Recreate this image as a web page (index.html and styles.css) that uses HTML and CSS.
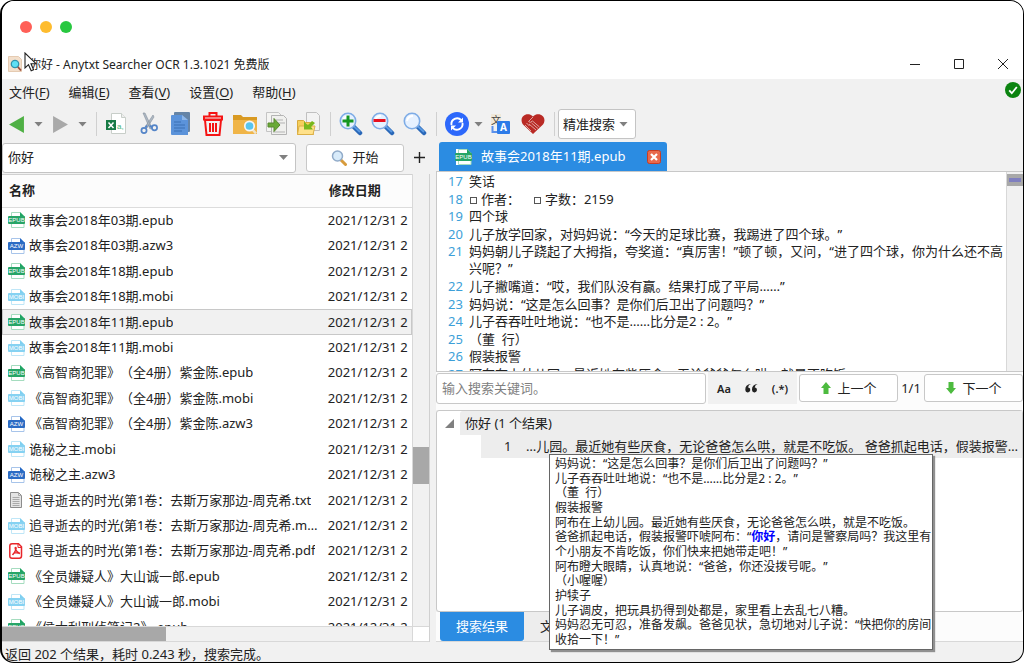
FILE: index.html
```html
<!DOCTYPE html>
<html lang="zh-CN">
<head>
<meta charset="utf-8">
<title>你好 - Anytxt Searcher OCR 1.3.1021 免费版</title>
<link rel="stylesheet" href="styles.css">
</head>
<body>
<svg class="sprite" aria-hidden="true">
  <symbol id="epub" viewBox="0 0 17 16"><path d="M3.500 5V.5h8.500l4 4V5M3.500 10v5.500H16V10" fill="#fff" stroke="#a5dcbf"/><path d="M12 0l4.500 4.500H12z" fill="#1fa463"/><rect y="4" width="17" height="8" rx="1" fill="#27a567"/><text x="8.500" y="10.400" text-anchor="middle" class="badge">EPUB</text></symbol>
  <symbol id="azw" viewBox="0 0 17 16"><path d="M3.500 5V.5h8.500l4 4V5M3.500 10v5.500H16V10" fill="#fff" stroke="#a7c4ea"/><path d="M12 0l4.500 4.500H12z" fill="#2468c4"/><rect y="4" width="17" height="8" rx="1" fill="#2c6cc4"/><text x="8.500" y="10.400" text-anchor="middle" class="badge">AZW</text></symbol>
  <symbol id="mobi" viewBox="0 0 17 16"><path d="M3.500 5V.5h8.500l4 4V5M3.500 10v5.500H16V10" fill="#fff" stroke="#bfe6f7"/><path d="M12 0l4.500 4.500H12z" fill="#7fcff0"/><rect y="4" width="17" height="8" rx="1" fill="#86d2f2"/><text x="8.500" y="10.400" text-anchor="middle" class="badge">MOBI</text></symbol>
  <symbol id="txt" viewBox="0 0 17 16"><path d="M2.500.5h8l3 3v12h-11z" fill="#e4e4e4" stroke="#8c8c8c"/><path d="M10.500.5v3h3M4.500 5.500h7M4.500 7.500h7M4.500 9.500h7M4.500 11.500h7M4.500 13.500h7" fill="none" stroke="#aaa"/></symbol>
  <symbol id="pdf" viewBox="0 0 17 16"><path d="M4 .8h6.500l3 3V13q0 2.200-2.200 2.200H4Q1.800 15.200 1.800 13V3Q1.800.8 4 .8z" fill="#fff" stroke="#e8262b" stroke-width="1.500"/><path d="M10 1v3.500h3.500" fill="none" stroke="#e8262b"/><path d="M7.500 4.500c1.400 0 .5 3.500-3 7.500M7.500 4.500C6.500 5 8 9 12 10.500M4.500 12c.5-2 4-3 7.500-1.500" fill="none" stroke="#e8262b" stroke-width="1.400"/></symbol>
  <symbol id="lens" viewBox="0 0 24 24"><path d="M14.500 14.500l6.500 6.500" stroke="#2a68b8" stroke-width="4.500" stroke-linecap="round"/><path d="M15 14.500l5.500 5" stroke="#5b9ae2" stroke-width="1.800" stroke-linecap="round"/><circle cx="9" cy="9" r="7.700" fill="#e6f1ff" stroke="#7eacE6" stroke-width="1.600"/><path d="M4 9q1-5 6-5" fill="none" stroke="#fff" stroke-width="2"/></symbol>
</svg>
<div class="window">
  <header class="titlebar">
    <div class="lights"><i class="red"></i><i class="amber"></i><i class="green"></i></div>
    <div class="caption">
      <svg class="appicon" viewBox="0 0 14 16"><path d="M.5.500h10l3 3v12H.5z" fill="#f3dfcb" stroke="#e5cbb2"/><path d="M9.500 10.500l3.500 4" stroke="#9a4a3a" stroke-width="1.800"/><circle cx="7" cy="8" r="3.700" fill="#5fe0f4" stroke="#3293ad" stroke-width="1.300"/></svg>
      <h1>你好 - Anytxt Searcher OCR 1.3.1021 免费版</h1>
      <svg class="cursor" viewBox="0 0 14 20"><path d="M1 1v15l3.500-3.300 2.700 6 2.400-1-2.600-6H12z" fill="#fff" stroke="#222" stroke-width="1.100"/></svg>
      <div class="winbtns">
        <button aria-label="最小化"><svg viewBox="0 0 12 12"><path d="M1 6.500h10" stroke="#222"/></svg></button>
        <button aria-label="最大化"><svg viewBox="0 0 12 12"><path d="M1.500 1.500h9v9h-9z" fill="none" stroke="#222"/></svg></button>
        <button aria-label="关闭"><svg viewBox="0 0 12 12"><path d="M1 1l10 10M11 1L1 11" stroke="#222"/></svg></button>
      </div>
    </div>
  </header>
  <nav class="menu">
    <button>文件(<u>F</u>)</button><button>编辑(<u>E</u>)</button><button>查看(<u>V</u>)</button><button>设置(<u>O</u>)</button><button>帮助(<u>H</u>)</button>
    <svg class="ok" viewBox="0 0 16 16"><circle cx="8" cy="8" r="8" fill="#0b8410"/><path d="M4.200 8.300l2.600 2.900 5-6.200" fill="none" stroke="#fff" stroke-width="1.800"/></svg>
  </nav>
  <div class="toolbar">
    <div class="group nav">
      <button aria-label="后退"><svg class="arrow" viewBox="0 0 14 16"><path d="M14 0v16L0 8z" fill="#4fb045"/></svg></button>
      <i class="caret"></i>
      <button aria-label="前进"><svg class="arrow" viewBox="0 0 14 16"><path d="M0 0v16l14-8z" fill="#a9a9a9"/></svg></button>
      <i class="caret"></i>
    </div>
    <div class="group">
      <button aria-label="导出 CSV"><svg viewBox="0 0 24 24"><path d="M6.500 1.500h10l4 4v16h-14z" fill="#fff" stroke="#c8cec9"/><path d="M16.500 1.500v4h4" fill="#eee" stroke="#c8cec9"/><rect x="1" y="8" width="10" height="10" fill="#187b45"/><path d="M3.500 10.500l5 5.500M8.500 10.500l-5 5.500" stroke="#fff" stroke-width="1.500"/><text x="12" y="17" class="csv">a,</text></svg></button>
      <button aria-label="剪切"><svg viewBox="0 0 24 24"><path d="M6 1l2 0 7 15-2 1zM16 3l1 2-7 11-2-1z" fill="#aeb8c3" stroke="#84909d" stroke-width=".6"/><path d="M10 13.500l-1.500 2M12.500 14l3 1" stroke="#5585c8" stroke-width="2"/><circle cx="7" cy="18.500" r="2.600" fill="none" stroke="#5585c8" stroke-width="1.700"/><circle cx="17.500" cy="15.800" r="2.600" fill="none" stroke="#5585c8" stroke-width="1.700"/></svg></button>
      <button aria-label="复制"><svg viewBox="0 0 24 24"><rect x="5" y="0" width="16" height="20" rx="1" fill="#6584a6"/><path d="M3 3h10l6 5v15H3q-1 0-1-1V4q0-1 1-1z" fill="#5b93da"/><path d="M5 10h7M5 13h11M5 16h11M5 19h8" stroke="#3a70b4" stroke-width="1.200"/><path d="M13 3v5h6" fill="#8db6e8"/></svg></button>
      <button aria-label="删除"><svg viewBox="0 0 24 24"><g fill="none" stroke="#f51414" stroke-width="2"><path d="M4 8h16l-1.500 15h-13zM3 7.500V4.500h18v3zM8.500 4.500V1h7v3.500M9 11v9M12 11v9M15 11v9"/></g></svg></button>
      <button aria-label="打开文件夹"><svg viewBox="0 0 24 24"><path d="M0 3h8l2 2h14v17H0z" fill="#d99a22"/><path d="M0 8h24v14H0z" fill="#f0b548"/><path d="M19 17l4 4.500" stroke="#efe3ca" stroke-width="2.500"/><circle cx="16.500" cy="14" r="4.700" fill="#58c5ee" stroke="#f4f6f7" stroke-width="1.700"/></svg></button>
      <button aria-label="导出文件"><svg viewBox="0 0 24 24"><path d="M1.500.5h12l3 3v16h-15z" fill="#f4f4f2" stroke="#c4c4c4"/><path d="M6.500 3.500h12l3 3v16h-15z" fill="#f0f0ee" stroke="#b4b4b4"/><path d="M11 8h7M12 11h8M8 20h12" stroke="#b3b3b3"/><path d="M3 11h6V6.500l6 6.500-6 6.500V15H3z" fill="#69a936" stroke="#58882f"/></svg></button>
      <button aria-label="导出到文件夹"><svg viewBox="0 0 24 24"><path d="M9.500.5h10l3 3v15h-13z" fill="#f3f3f3" stroke="#c0c0c0"/><path d="M.5 8.500h6l2 2h5l3 12H.5z" fill="#f5cf5c" stroke="#d8a93c"/><path d="M2 14h16l-2 8.500H.5z" fill="#ffe18a" stroke="#dcb047"/><path d="M15 9l3 2-4 4 2 2.500H7V9.500l2.500 2.500 1.500 1z" fill="#79b81c"/></svg></button>
    </div>
    <div class="group">
      <button aria-label="放大"><svg viewBox="0 0 24 24"><use href="#lens"/><path d="M9 3.500v11M3.500 9h11" stroke="#149621" stroke-width="3"/></svg></button>
      <button aria-label="缩小"><svg viewBox="0 0 24 24"><use href="#lens"/><path d="M2.500 8.500h12" stroke="#e80f1e" stroke-width="3"/></svg></button>
      <button aria-label="查找"><svg viewBox="0 0 24 24"><use href="#lens"/></svg></button>
    </div>
    <div class="group sync">
      <button aria-label="更新索引"><svg viewBox="0 0 24 24"><circle cx="12" cy="12" r="12" fill="#2d68fb"/><g fill="none" stroke="#fff" stroke-width="1.900"><path d="M6.500 13a5.700 5.700 0 0 1 9.800-4.800M17.500 11a5.700 5.700 0 0 1-9.800 4.800"/></g><path d="M18 5.500v5h-5zM6 18.500v-5h5z" fill="#fff"/></svg></button>
      <i class="caret"></i>
      <button aria-label="翻译"><svg viewBox="0 0 24 24"><rect x="2" y="2" width="10" height="11" fill="#f0e8d9"/><text x="2" y="12" class="tr-zh">文</text><path d="M3.500 14v6h6" fill="none" stroke="#5a90ea" stroke-width="2"/><rect x="8" y="9" width="13" height="13" rx="1" fill="#2d7be8"/><text x="11" y="19" class="tr-en">A</text></svg></button>
      <button aria-label="捐助"><svg viewBox="0 0 24 24"><path d="M12 22L2 12.500C-3 5 6-1 12 4.500 18-1 27 5 22 12.500z" fill="#b92a25"/><g fill="none" stroke="#dfa5a0" stroke-width="1"><path d="M12 5L7.500 9.500q1.500 2 4-.5l7 6M5.500 11l3 3M4 13l6 6M8 12l7 6M10.500 11l6.500 5.500"/></g></svg></button>
    </div>
    <label class="combo mode"><select aria-label="搜索模式"><option>精准搜索</option></select></label>
  </div>
  <main>
    <section class="left">
      <div class="query">
        <label class="combo"><select aria-label="搜索词"><option>你好</option></select></label>
        <button class="btn start"><svg viewBox="0 0 16 16"><path d="M10 10l4.500 4.500" stroke="#d79b3c" stroke-width="3" stroke-linecap="round"/><circle cx="6.500" cy="6" r="5" fill="#d8ebfa" stroke="#91abc9" stroke-width="1.500"/></svg>开始</button>
        <button class="plus" aria-label="新建"><svg viewBox="0 0 11 11"><path d="M5.500 0v11M0 5.500h11" stroke="#222" stroke-width="1.400"/></svg></button>
      </div>
      <div class="files">
        <div class="scroller">
          <table>
            <thead><tr><th class="name">名称</th><th>修改日期</th></tr></thead>
            <tbody>
              <tr><td><div><svg><use href="#epub"/></svg><span>故事会2018年03期.epub</span></div></td><td>2021/12/31 2</td></tr>
              <tr><td><div><svg><use href="#azw"/></svg><span>故事会2018年03期.azw3</span></div></td><td>2021/12/31 2</td></tr>
              <tr><td><div><svg><use href="#epub"/></svg><span>故事会2018年18期.epub</span></div></td><td>2021/12/31 2</td></tr>
              <tr><td><div><svg><use href="#mobi"/></svg><span>故事会2018年18期.mobi</span></div></td><td>2021/12/31 2</td></tr>
              <tr class="selected"><td><div><svg><use href="#epub"/></svg><span>故事会2018年11期.epub</span></div></td><td>2021/12/31 2</td></tr>
              <tr><td><div><svg><use href="#mobi"/></svg><span>故事会2018年11期.mobi</span></div></td><td>2021/12/31 2</td></tr>
              <tr><td><div><svg><use href="#epub"/></svg><span>《高智商犯罪》（全4册）紫金陈.epub</span></div></td><td>2021/12/31 2</td></tr>
              <tr><td><div><svg><use href="#mobi"/></svg><span>《高智商犯罪》（全4册）紫金陈.mobi</span></div></td><td>2021/12/31 2</td></tr>
              <tr><td><div><svg><use href="#azw"/></svg><span>《高智商犯罪》（全4册）紫金陈.azw3</span></div></td><td>2021/12/31 2</td></tr>
              <tr><td><div><svg><use href="#mobi"/></svg><span>诡秘之主.mobi</span></div></td><td>2021/12/31 2</td></tr>
              <tr><td><div><svg><use href="#azw"/></svg><span>诡秘之主.azw3</span></div></td><td>2021/12/31 2</td></tr>
              <tr><td><div><svg><use href="#txt"/></svg><span>追寻逝去的时光(第1卷：去斯万家那边-周克希.txt</span></div></td><td>2021/12/31 2</td></tr>
              <tr><td><div><svg><use href="#mobi"/></svg><span>追寻逝去的时光(第1卷：去斯万家那边-周克希.mobi</span></div></td><td>2021/12/31 2</td></tr>
              <tr><td><div><svg><use href="#pdf"/></svg><span>追寻逝去的时光(第1卷：去斯万家那边-周克希.pdf</span></div></td><td>2021/12/31 2</td></tr>
              <tr><td><div><svg><use href="#epub"/></svg><span>《全员嫌疑人》大山诚一郎.epub</span></div></td><td>2021/12/31 2</td></tr>
              <tr><td><div><svg><use href="#mobi"/></svg><span>《全员嫌疑人》大山诚一郎.mobi</span></div></td><td>2021/12/31 2</td></tr>
              <tr><td><div><svg><use href="#epub"/></svg><span>《侯大利刑侦笔记2》.epub</span></div></td><td>2021/12/31 2</td></tr>
            </tbody>
          </table>
        </div>
        <div class="vbar"><i></i></div>
        <div class="hbar"><i></i></div>
        <div class="corner"></div>
      </div>
    </section>
    <section class="right">
      <div class="tabs">
        <div class="tab"><svg viewBox="0 0 17 16"><path d="M1 5V0h11l4 4v12H1z" fill="#fff"/><path d="M12 0l4 4h-4z" fill="#1fa463"/><use href="#epub" width="17" height="16"/></svg><span>故事会2018年11期.epub</span>
          <button aria-label="关闭标签"><svg viewBox="0 0 14 14"><rect x=".5" y=".5" width="13" height="13" rx="2" fill="#e8694c" stroke="#c93c22"/><path d="M4 4l6 6M10 4l-6 6" stroke="#fff" stroke-width="2.200"/></svg></button></div>
      </div>
      <div class="editor">
        <div class="lines">
          <div><b>17</b><p>笑话</p></div>
          <div><b>18</b><p><i class="box"></i>作者：<i class="box far"></i>字数：2159</p></div>
          <div><b>19</b><p>四个球</p></div>
          <div><b>20</b><p>儿子放学回家，对妈妈说：“今天的足球比赛，我踢进了四个球。”</p></div>
          <div><b>21</b><p>妈妈朝儿子跷起了大拇指，夸奖道：“真厉害！”顿了顿，又问，“进了四个球，你为什么还不高兴呢？”</p></div>
          <div><b>22</b><p>儿子撇嘴道：“哎，我们队没有赢。结果打成了平局……”</p></div>
          <div><b>23</b><p>妈妈说：“这是怎么回事？是你们后卫出了问题吗？”</p></div>
          <div><b>24</b><p>儿子吞吞吐吐地说：“也不是……比分是2 : 2。”</p></div>
          <div><b>25</b><p>（董&nbsp; 行）</p></div>
          <div><b>26</b><p>假装报警</p></div>
          <div><b>27</b><p>阿布在上幼儿园。最近她有些厌食，无论爸爸怎么哄，就是不吃饭。</p></div>
        </div>
        <div class="vbar"><i></i></div>
      </div>
      <div class="find">
        <input type="text" placeholder="输入搜索关键词。" aria-label="搜索关键词">
        <div class="opts"><button>Aa</button><button aria-label="全词匹配"><svg viewBox="0 0 13 9"><path d="M6 0Q3.300.6 3 3.500h.5A2.500 2.500 0 1 1 .3 6Q0 .5 6 0zM12.700 0Q10 .6 9.700 3.500h.5A2.500 2.500 0 1 1 7 6Q6.700.5 12.700 0z" fill="#222"/></svg></button><button>(.*)</button></div>
        <button class="btn"><svg viewBox="0 0 12 14"><path d="M6 1l5 6H8.500v6h-5V7H1z" fill="#4dbb3f"/></svg>上一个</button>
        <span>1/1</span>
        <button class="btn"><svg viewBox="0 0 12 14"><path d="M6 13l5-6H8.500V1h-5v6H1z" fill="#4dbb3f"/></svg>下一个</button>
      </div>
      <div class="results">
        <div class="root"><svg viewBox="0 0 9 9"><path d="M9 0v9H0z" fill="#808080"/></svg><span>你好 (1 个结果)</span></div>
        <div class="hit"><b>1</b><span>…儿园。最近她有些厌食，无论爸爸怎么哄，就是不吃饭。 爸爸抓起电话，假装报警…</span></div>
        <div class="tip" role="tooltip">
          <p>妈妈说：“这是怎么回事？是你们后卫出了问题吗？”</p>
          <p>儿子吞吞吐吐地说：“也不是……比分是2 : 2。”</p>
          <p>（董&nbsp; 行）</p>
          <p>假装报警</p>
          <p>阿布在上幼儿园。最近她有些厌食，无论爸爸怎么哄，就是不吃饭。</p>
          <p>爸爸抓起电话，假装报警吓唬阿布：“<strong>你好</strong>，请问是警察局吗？我这里有</p>
          <p>个小朋友不肯吃饭，你们快来把她带走吧！”</p>
          <p>阿布瞪大眼睛，认真地说：“爸爸，你还没拨号呢。”</p>
          <p>（小喔喔）</p>
          <p>护犊子</p>
          <p>儿子调皮，把玩具扔得到处都是，家里看上去乱七八糟。</p>
          <p>妈妈忍无可忍，准备发飙。爸爸见状，急切地对儿子说：“快把你的房间</p>
          <p>收拾一下！”</p>
        </div>
      </div>
      <div class="bottomtabs"><button class="active">搜索结果</button><button class="next">文</button></div>
    </section>
  </main>
  <footer>返回 202 个结果，耗时 0.243 秒，搜索完成。</footer>
</div>
</body>
</html>
```

FILE: styles.css
```css
* { box-sizing: border-box; }
body {
  margin: 0;
  background: #fff;
  color: #222;
  font: 13px/17px "Noto Sans", "Noto Sans CJK SC", sans-serif;
  text-spacing-trim: space-all;
}
button, select, input { font: inherit; color: inherit; }
button { padding: 0; border: 0; background: none; }
svg { display: block; flex: none; }
p { margin: 0; }
.sprite { position: absolute; width: 0; height: 0; }
.badge { font: 6px "Liberation Sans", sans-serif; fill: #fff; }
.csv { font: 8px "Liberation Sans", sans-serif; fill: #4bb578; }
.tr-zh { font: 10px "Noto Sans CJK SC", sans-serif; fill: #444; }
.tr-en { font: bold 10px "Noto Sans", sans-serif; fill: #fff; }

.window {
  display: flex;
  flex-direction: column;
  height: 100vh;
  overflow: hidden;
  border: 1px solid #000;
  border-left-width: 2px;
  border-radius: 14px;
  background: #f1f1f1;
}

/* Title bar */
.titlebar { height: 78px; flex: none; background: #fff; }
.lights { display: flex; gap: 8px; padding: 20px 0 0 18px; height: 48px; }
.lights i { width: 12px; height: 12px; border-radius: 50%; }
.red { background: #ff5f57; }
.amber { background: #febc2e; }
.green { background: #28c840; }
.caption { position: relative; display: flex; align-items: center; height: 30px; padding-left: 6px; }
.appicon { width: 14px; height: 16px; }
.caption h1 { margin: 0 auto 0 7px; font-size: 12px; font-weight: 400; }
.cursor { position: absolute; left: 22px; top: 3px; width: 14px; height: 20px; }
.winbtns { display: flex; }
.winbtns button { width: 44px; padding: 8px 14px 8px 18px; }
.winbtns svg { width: 12px; height: 12px; }

.menu { display: flex; align-items: center; flex: none; gap: 19px; height: 27px; padding: 0 2px 0 7px; }
.menu u { text-underline-offset: 2px; }
.ok { width: 16px; height: 16px; margin: 0 0 6px auto; }

/* Toolbar */
.toolbar { display: flex; align-items: center; flex: none; height: 36px; padding-left: 7px; }
.group { display: flex; align-items: center; gap: 8px; }
.group + .group, .mode { position: relative; margin-left: 18px; }
.group + .group::before, .mode::before {
  content: "";
  position: absolute;
  left: -9px;
  width: 1px;
  height: 24px;
  background: #d0d0d0;
}
.group svg { width: 24px; height: 24px; }
.group .arrow { width: 15px; height: 17px; }
.group.nav { gap: 10px; }
.group button { flex: none; }
.sync .caret { margin: 0 -2px 0 -3px; }
.caret, .combo::after {
  width: 9px;
  height: 5px;
  background: #808080;
  clip-path: polygon(0 0, 100% 0, 50% 100%);
}
.combo { position: relative; display: flex; align-items: center; }
.combo::after { content: ""; position: absolute; right: 8px; }
.combo select {
  appearance: none;
  width: 100%;
  height: 30px;
  padding: 0 22px 0 5px;
  border: 1px solid #c4c4c4;
  border-radius: 3px;
  background: #fff;
}
.toolbar .mode { margin-left: 13px; }
.mode::before { left: -4px; }
.mode select { width: 78px; padding: 0 18px 0 4px; }
.btn {
  display: flex;
  align-items: center;
  justify-content: center;
  gap: 5px;
  height: 28px;
  border: 1px solid #c8c8c8;
  border-radius: 3px;
  background: #fff;
}

main {
  display: grid;
  grid-template-columns: minmax(0, 428fr) minmax(0, 587fr);
  gap: 6px;
  flex: 1;
  min-height: 0;
}
.left, .right { display: flex; flex-direction: column; min-width: 0; min-height: 0; }
.query { display: flex; align-items: center; flex: none; height: 31px; margin-bottom: 1px; }
.query .combo { flex: 1; }
.start { width: 98px; margin: 0 10px 0 10px; }
.start svg { width: 16px; height: 16px; }
.plus { width: 11px; margin-right: 5px; }
.plus svg { width: 11px; height: 11px; }

/* File list */
.files {
  display: grid;
  grid-template: minmax(0, 1fr) 16px / minmax(0, 1fr) 17px;
  flex: 1;
  min-height: 0;
  border-right: 1px solid #d0d0d0;
}
.scroller { overflow: hidden; border-top: 1px solid #d0d0d0; background: #fff; }
table { width: 100%; height: calc(100% + 14px); table-layout: fixed; border-collapse: collapse; }
th { height: 32px; padding: 0 0 0 7px; border-bottom: 1px solid #dcdcdc; background: #fcfcfc; text-align: left; white-space: nowrap; }
.name { width: 78%; }
td { padding: 0 0 0 6px; overflow: hidden; white-space: nowrap; }
td div { display: flex; align-items: center; gap: 4px; padding-right: 1px; }
td svg { width: 17px; height: 16px; }
td span { overflow: hidden; text-overflow: ellipsis; }
.selected { background: #f1f1f1; outline: 1px solid #c8c8c8; outline-offset: -1px; }
.vbar { border-left: 1px solid #d8d8d8; background: #f1f1f1; }
.vbar i, .hbar i { display: block; background: #a8a8a8; }
.files .vbar { padding-top: 273px; }
.files .vbar i { height: 37px; }
.hbar, .corner { border: solid #d8d8d8; border-width: 1px 0; }
.hbar i { width: 40%; height: 100%; }
.corner { background: #fff; border-left-width: 1px; }

/* Document */
.tabs { display: flex; flex: none; height: 29px; padding-left: 3px; }
.tab { display: flex; align-items: center; width: 228px; padding: 0 6px 0 16px; border-radius: 3px 3px 0 0; background: #2b8ce2; color: #fff; }
.tab > svg { width: 17px; height: 16px; }
.tab span { margin: 0 auto 0 9px; }
.tab button svg { width: 14px; height: 14px; }
.editor {
  display: grid;
  grid-template-columns: minmax(0, 1fr) 17px;
  flex: none;
  height: 201px;
  overflow: hidden;
  border: 1px solid #c8c8c8;
  border-right: 0;
  background: #fff;
}
.lines { display: flex; flex-direction: column; justify-content: space-between; height: 211px; padding: 1px 0 0 11px; }
.lines div { display: flex; gap: 6px; }
.lines b { font-weight: 400; color: #3d9fd8; }
.lines p { flex: 1; }
.box { display: inline-block; width: 7px; height: 7px; margin: 0 4px 0 1px; border: 1px solid #555; }
.far { margin-left: 14px; }
.editor .vbar { padding-top: 2px; }
.editor .vbar i { height: 12px; border: solid #a8a8a8; border-width: 4px 2px; background: #7f7fbf; }

.find { display: flex; align-items: center; flex: none; height: 38px; padding-bottom: 6px; background: #fcfcfc; }
.find input { flex: 1; min-width: 0; height: 31px; padding: 0 5px; border: 1px solid #c8c8c8; border-radius: 3px; background: #fff; }
.find input::placeholder { color: #808080; }
.opts { display: flex; justify-content: space-around; align-items: center; width: 89px; height: 32px; margin: 0 2px; padding: 0 2px; background: #f1f1f1; font-size: 11px; font-weight: 600; }
.opts svg { width: 13px; height: 9px; }
.find .btn { width: 99px; }
.find .btn svg { width: 12px; height: 14px; }
.find span { width: 26px; text-align: center; }

/* Results */
.results { position: relative; flex: 1; min-height: 0; border: 1px solid #c8c8c8; border-radius: 3px; background: #fff; }
.root { display: flex; align-items: center; gap: 6px; height: 24px; padding-left: 8px; }
.root svg { width: 9px; height: 9px; }
.root span { flex: 1; padding: 4px 5px 3px; background: #ededed; border-radius: 3px 0 0 0; }
.hit { display: flex; align-items: center; height: 23px; margin-left: 44px; padding-left: 23px; background: #ededed; }
.hit b { flex: none; width: 22px; font-weight: 400; }
.hit span { flex: 1; overflow: hidden; white-space: nowrap; text-overflow: ellipsis; }
.tip {
  position: absolute;
  left: 112px;
  top: 43px;
  z-index: 1;
  display: flex;
  flex-direction: column;
  justify-content: space-between;
  width: 384px;
  height: 196px;
  padding: 2px 0 2px 5px;
  border: 1px solid #666;
  background: #fff;
  box-shadow: 2px 2px 1px #909090;
  font-size: 12px;
  line-height: 14px;
  white-space: nowrap;
}
.tip strong { color: #00f; }
.bottomtabs { display: flex; flex: none; height: 30px; padding-left: 4px; border-bottom: 1px solid #d8d8d8; background: #fcfcfc; }
.bottomtabs button { width: 84px; background: #ededed; }
.bottomtabs .active { border-radius: 0 0 3px 3px; background: #2b8ce2; color: #fff; }
.bottomtabs .next { padding-left: 16px; text-align: left; }

footer { flex: none; height: 20px; padding: 4px 0 0 3px; line-height: 16px; }
```
